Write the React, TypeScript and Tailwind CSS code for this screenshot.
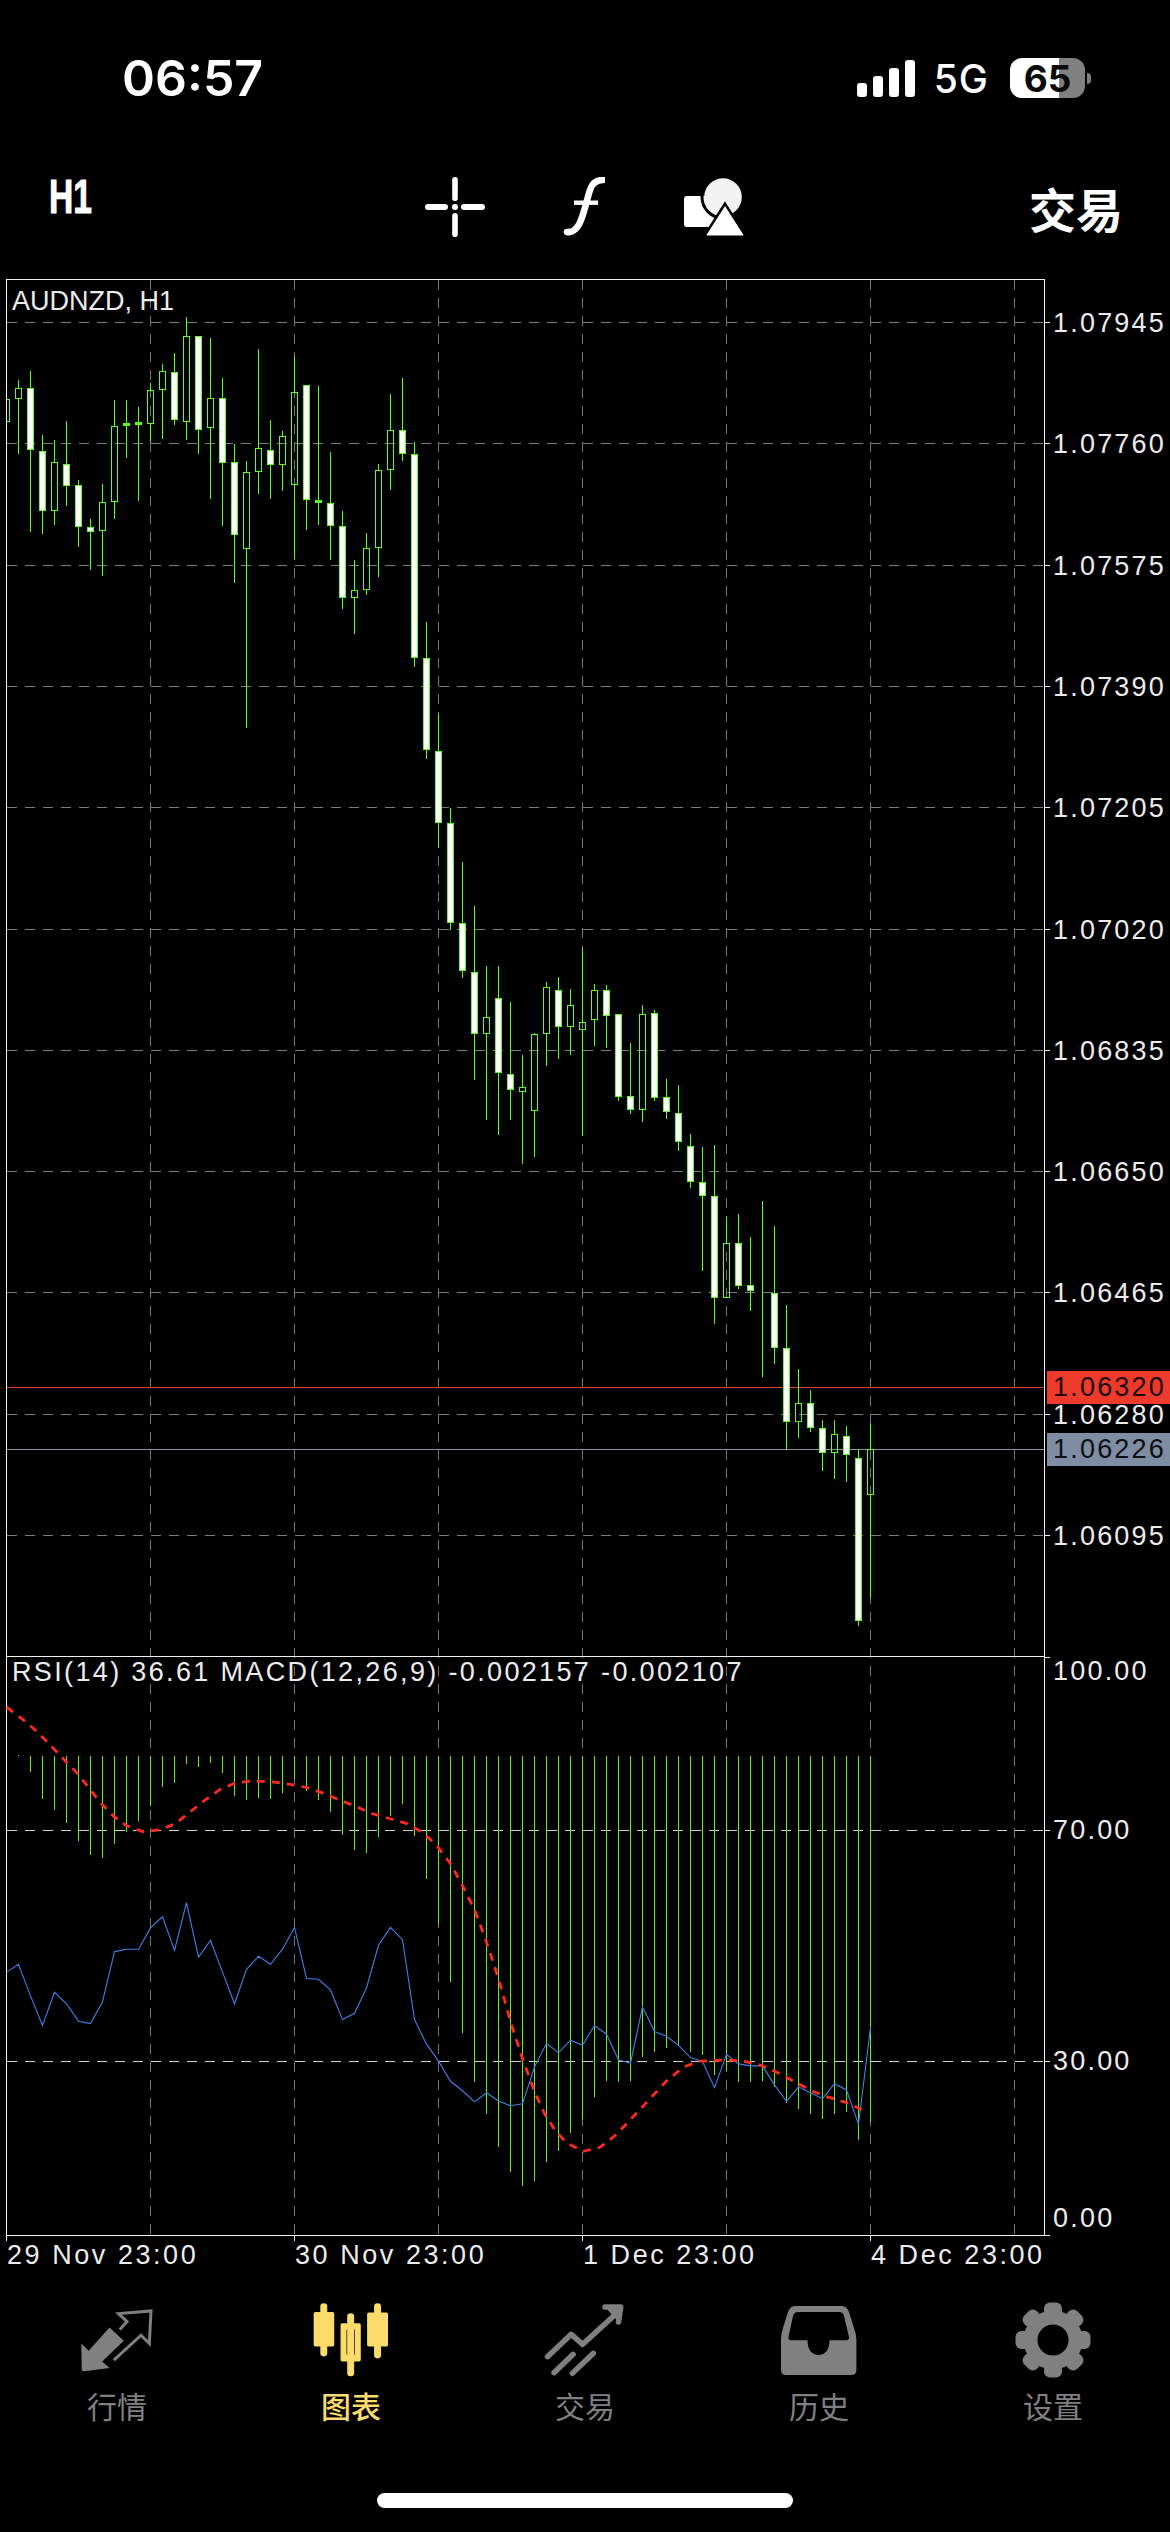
import React from 'react';

const SANS = "font-['Liberation_Sans',Arial,sans-serif]";
const CJK = "font-['Noto_Sans_CJK_SC','Noto_Sans',sans-serif]";
const CHART_TOP = 270;

const CANDLE = '#5BFF1E';
const HIST = '#66F020';

// values are read off the 3x crops: [high, bodyTop, bodyBottom, low, kind]
// kind: w = white body, h = hollow body, d = doji
type Row = [number, number, number, number, 'w' | 'h' | 'd'];

const fromCrop = (base: number, rows: Row[]) =>
  rows.map(([high, top, bottom, low, kind]) => ({
    high: base + high / 3,
    top: base + top / 3,
    bottom: base + bottom / 3,
    low: base + low / 3,
    kind,
  }));

const candles = [
  ...fromCrop(280, [
    [358, 358, 422, 422, 'h'],
    [297, 325, 355, 518, 'h'],
    [270, 323, 508, 752, 'w'],
    [462, 512, 691, 760, 'w'],
    [476, 547, 689, 732, 'h'],
    [420, 553, 616, 676, 'w'],
    [597, 614, 739, 798, 'w'],
    [715, 742, 754, 866, 'w'],
    [608, 667, 751, 885, 'h'],
    [357, 439, 664, 715, 'h'],
    [357, 430, 436, 530, 'd'],
    [378, 427, 431, 660, 'd'],
    [307, 331, 430, 482, 'h'],
    [250, 274, 328, 475, 'h'],
    [217, 275, 418, 431, 'w'],
    [108, 169, 424, 476, 'h'],
    [165, 169, 448, 520, 'w'],
    [172, 355, 442, 654, 'h'],
    [290, 355, 547, 736, 'w'],
    [488, 547, 763, 906, 'w'],
    [540, 577, 805, 1340, 'h'],
    [204, 505, 574, 640, 'h'],
    [416, 511, 553, 655, 'w'],
    [450, 469, 553, 630, 'h'],
    [225, 337, 613, 835, 'h'],
    [313, 316, 658, 748, 'w'],
    [316, 661, 667, 732, 'd'],
    [513, 670, 736, 837, 'w'],
    [690, 739, 952, 984, 'w'],
    [836, 931, 952, 1060, 'h'],
    [755, 805, 928, 942, 'h'],
    [548, 571, 800, 888, 'h'],
    [340, 451, 568, 628, 'h'],
    [292, 451, 520, 540, 'w'],
    [483, 523, 1132, 1158, 'w'],
    [1024, 1135, 1408, 1434, 'w'],
  ]),
  ...fromCrop(740, [
    [-80, 34, 247, 322, 'w'],
    [200, 250, 547, 567, 'w'],
    [363, 550, 691, 711, 'w'],
    [496, 697, 880, 1016, 'w'],
    [676, 832, 880, 1137, 'h'],
    [676, 775, 997, 1183, 'w'],
    [783, 1003, 1048, 1136, 'w'],
    [942, 1042, 1052, 1268, 'h'],
    [877, 883, 1111, 1248, 'h'],
    [724, 742, 880, 975, 'h'],
    [709, 751, 859, 955, 'w'],
    [745, 796, 859, 942, 'h'],
    [620, 847, 868, 1184, 'h'],
    [730, 751, 838, 915, 'h'],
    [733, 751, 824, 920, 'w'],
    [823, 823, 1067, 1080, 'w'],
    [905, 1069, 1108, 1120, 'w'],
    [792, 823, 1108, 1143, 'h'],
    [808, 820, 1070, 1080, 'w'],
    [1014, 1072, 1114, 1135, 'w'],
    [1032, 1120, 1204, 1230, 'w'],
    [1180, 1219, 1324, 1340, 'w'],
  ]),
  ...fromCrop(1180, [
    [-101, 6, 46, 270, 'w'],
    [-108, 49, 352, 428, 'w'],
    [108, 190, 352, 352, 'h'],
    [98, 190, 314, 324, 'w'],
    [168, 316, 329, 390, 'w'],
    [60, 331, 331, 587, 'h'],
    [134, 340, 502, 548, 'w'],
    [372, 505, 724, 808, 'w'],
    [564, 670, 724, 772, 'h'],
    [627, 670, 742, 752, 'w'],
    [716, 745, 815, 871, 'w'],
    [718, 763, 815, 895, 'h'],
    [735, 769, 823, 903, 'w'],
    [808, 835, 1321, 1335, 'w'],
    [727, 808, 943, 1250, 'h'],
  ]),
];

const INDICATOR_SCALE = 2.529;
const indY = (z: number) => 1640 + z / INDICATOR_SCALE;
const barX = (i: number) => 6.5 + 12 * i;

// starts at the second candle
const histogram = [
  290, 333, 402, 430, 463, 508, 543, 551, 515, 485, 458, 420, 373, 362, 314, 321, 311, 337, 394, 404, 400, 402, 388,
  352, 381, 405, 435, 492, 530, 539, 498, 445, 414, 495, 605, 721, 865, 994, 1118, 1200, 1283, 1345, 1380, 1368, 1320,
  1292, 1248, 1212, 1156, 1115, 1117, 1115, 1055, 1042, 1032, 1025, 1042, 1050, 1100, 1090, 1117, 1118, 1115, 1130,
  1170, 1187, 1198, 1212, 1200, 1193, 1265, 1218,
];

const rsi = [
  840, 820, 900, 975, 891, 920, 964, 970, 915, 788, 782, 782, 728, 700, 785, 664, 802, 760, 840, 920, 833, 800, 820,
  782, 727, 856, 858, 885, 960, 944, 880, 772, 727, 758, 960, 1022, 1065, 1116, 1140, 1168, 1145, 1166, 1178, 1173,
  1080, 1020, 1044, 1012, 1025, 975, 997, 1062, 1070, 928, 990, 1002, 1025, 1056, 1066, 1132, 1048, 1072, 1077, 1077,
  1125, 1167, 1130, 1145, 1160, 1122, 1138, 1225, 980,
];

const signalLeft = [
  [20, 170], [75, 205], [115, 235], [150, 265], [195, 305], [235, 340], [270, 378], [300, 410], [340, 445], [380, 470],
  [430, 485], [480, 480], [525, 465], [570, 435], [615, 405], [660, 378], [705, 362], [750, 357], [810, 358], [870, 365],
  [920, 373], [965, 386], [1020, 405], [1070, 422], [1120, 440], [1170, 452], [1220, 464], [1270, 488], [1310, 520],
];
const signalRight = [
  [1, 565], [40, 625], [75, 685], [108, 760], [145, 855], [185, 975], [220, 1065], [255, 1145], [285, 1200], [315, 1240],
  [350, 1272], [400, 1293], [450, 1283], [500, 1250], [550, 1205], [600, 1160], [650, 1115], [700, 1080], [750, 1065],
  [830, 1062], [880, 1065], [935, 1076], [985, 1095], [1040, 1120], [1090, 1142], [1130, 1155], [1190, 1170], [1235, 1188],
];
const signalPoints = [
  ...signalLeft.map(([x, y]) => `${x / 3},${indY(y)}`),
  ...signalRight.map(([x, y]) => `${450 + x / 3},${indY(y)}`),
].join(' ');

const priceLabels = [
  '1.07945', '1.07760', '1.07575', '1.07390', '1.07205', '1.07020', '1.06835', '1.06650', '1.06465', '1.06280', '1.06095',
];
const priceY = (k: number) => Math.round(322 + 121.3 * k) + 0.5;
const indicatorLabels = [
  { text: '100.00', y: 1671 },
  { text: '70.00', y: 1830 },
  { text: '30.00', y: 2061 },
  { text: '0.00', y: 2218 },
];
const gridX = [150.5, 294.5, 438.5, 582.5, 726.5, 870.5, 1014.5];
const dateLabels = [
  { text: '29 Nov 23:00', x: 7 },
  { text: '30 Nov 23:00', x: 295 },
  { text: '1 Dec 23:00', x: 583 },
  { text: '4 Dec 23:00', x: 871 },
];

const snap = (v: number) => Math.round(v) + 0.5;

const Chart = () => (
  <svg viewBox={`0 ${CHART_TOP} 1170 2000`} width={1170} height={2000} className="block">
    <defs>
      <clipPath id="plot">
        <rect x={6} y={279} width={1038} height={1956} />
      </clipPath>
    </defs>
    <g shapeRendering="crispEdges" fill="none">
      {gridX.map(x => (
        <line key={x} x1={x} x2={x} y1={280} y2={2235} stroke="#747474" strokeDasharray="10 8" />
      ))}
      {priceLabels.map((_, k) => (
        <line key={k} x1={7} x2={1044} y1={priceY(k)} y2={priceY(k)} stroke="#7d7d7d" strokeDasharray="10 8" />
      ))}
      {[1830.5, 2061.5].map(y => (
        <line key={y} x1={7} x2={1044} y1={y} y2={y} stroke="#d0d0d0" strokeDasharray="10 8" />
      ))}

      <line x1={6} x2={1044} y1={1387.5} y2={1387.5} stroke="#e0402f" />
      <line x1={6} x2={1044} y1={1449.5} y2={1449.5} stroke="#8b93a0" />

      <g clipPath="url(#plot)">
        {candles.map((c, n) => {
          const x = barX(n);
          const top = snap(c.top);
          const bottom = snap(c.bottom);
          return (
            <g key={n} stroke={CANDLE}>
              <line x1={x} x2={x} y1={snap(c.high)} y2={top} />
              <line x1={x} x2={x} y1={bottom} y2={snap(c.low)} />
              <rect
                x={x - 3}
                y={top}
                width={6}
                height={Math.max(bottom - top, 0)}
                fill={c.kind === 'w' ? '#ffffff' : c.kind === 'd' ? CANDLE : 'none'}
              />
            </g>
          );
        })}
      </g>

      {histogram.map((z, i) => (
        <line key={i} x1={barX(i + 1)} x2={barX(i + 1)} y1={1756} y2={indY(z)} stroke={HIST} />
      ))}

      {/* frame and axis ticks */}
      <g stroke="#f2f2f2">
        <line x1={6.5} x2={6.5} y1={279} y2={2241} />
        <line x1={1044.5} x2={1044.5} y1={279} y2={2235} />
        <line x1={6} x2={1045} y1={279.5} y2={279.5} />
        <line x1={6} x2={1045} y1={1656.5} y2={1656.5} />
        <line x1={6} x2={1050} y1={2235.5} y2={2235.5} />
        {priceLabels.map((_, k) => (
          <line key={k} x1={1045} x2={1050} y1={priceY(k)} y2={priceY(k)} />
        ))}
        <line x1={1045} x2={1050} y1={1657.5} y2={1657.5} />
        <line x1={1045} x2={1050} y1={1830.5} y2={1830.5} />
        <line x1={1045} x2={1050} y1={2061.5} y2={2061.5} />
        {[294.5, 582.5, 870.5].map(x => (
          <line key={x} x1={x} x2={x} y1={2236} y2={2241} />
        ))}
      </g>
    </g>

    <polyline
      points={rsi.map((z, i) => `${barX(i)},${indY(z)}`).join(' ')}
      fill="none"
      stroke="#3f80ea"
      strokeWidth={1.1}
    />
    <polyline points={signalPoints} fill="none" stroke="#ff2a1f" strokeWidth={2.8} strokeDasharray="8 7" />
  </svg>
);

const AxisText = ({ text, x, y, className = '' }: { text: string; x: number; y: number; className?: string }) => (
  <span
    className={`absolute -translate-y-1/2 whitespace-nowrap text-[27px] leading-none ${SANS} ${className}`}
    style={{ left: x, top: y - CHART_TOP }}
  >
    {text}
  </span>
);

const ChartPanel = () => (
  <div className="relative h-[2000px] w-full text-[#ececec]">
    <Chart />
    <AxisText text="AUDNZD, H1" x={12} y={301} />
    <AxisText
      text="RSI(14) 36.61 MACD(12,26,9) -0.002157 -0.002107"
      x={12}
      y={1672}
      className="tracking-[2.35px]"
    />
    {priceLabels.map((text, k) => (
      <AxisText key={text} text={text} x={1053} y={priceY(k)} className="tracking-[2.2px]" />
    ))}
    {indicatorLabels.map(l => (
      <AxisText key={l.text} text={l.text} x={1053} y={l.y} className="tracking-[2.2px]" />
    ))}
    {dateLabels.map(l => (
      <AxisText key={l.text} text={l.text} x={l.x} y={2255} className="tracking-[2.55px]" />
    ))}
    <div
      className={`absolute left-[1047px] top-[1101px] flex h-[33px] w-[123px] items-center bg-[#ee3a2a] pl-[6px] text-[27px] leading-none tracking-[2.2px] text-[#1a0a08] ${SANS}`}
    >
      1.06320
    </div>
    <div
      className={`absolute left-[1047px] top-[1163px] flex h-[33px] w-[123px] items-center bg-[#7f8da2] pl-[6px] text-[27px] leading-none tracking-[2.2px] text-[#0c0f14] ${SANS}`}
    >
      1.06226
    </div>
  </div>
);

const StatusBar = () => (
  <div className="flex h-[150px] items-start justify-between pl-[122px] pr-[79px] pt-[58px] text-white">
    <span className="font-['Inter',sans-serif] text-[50px] font-semibold leading-[40px]">06:57</span>
    <div className="flex h-[40px] items-center">
      <div className="flex items-end gap-[6px] pt-[1px]">
        <div className="h-[14px] w-[10px] rounded-[3px] bg-white" />
        <div className="h-[21px] w-[10px] rounded-[3px] bg-white" />
        <div className="h-[29px] w-[10px] rounded-[3px] bg-white" />
        <div className="h-[37px] w-[10px] rounded-[3px] bg-white" />
      </div>
      <span className="ml-[19px] font-['Inter',sans-serif] text-[39px] font-medium leading-none tracking-[1px]">5G</span>
      <div className="ml-[21px] flex h-[40px] w-[75px] items-center justify-center rounded-[12px] bg-[linear-gradient(90deg,#ffffff_65%,#808080_65%)] font-['Inter',sans-serif] text-[37px] font-bold leading-none text-[#0a0a0a]">
        65
      </div>
      <div className="ml-[2px] h-[11px] w-[4px] rounded-r-full bg-[#808080]" />
    </div>
  </div>
);

const CrosshairIcon = () => (
  <svg width={60} height={60} viewBox="0 0 60 60" className="ml-[335px]">
    <g fill="white">
      <rect x={0} y={27} width={23} height={6} rx={3} />
      <rect x={36} y={27} width={24} height={6} rx={3} />
      <rect x={27.2} y={0} width={5.6} height={24} rx={2.8} />
      <rect x={27.2} y={36} width={5.6} height={24} rx={2.8} />
      <circle cx={30} cy={30} r={3} />
    </g>
  </svg>
);

const FunctionIcon = () => (
  <svg width={42} height={60} viewBox="0 0 42 60" fill="none" stroke="white" className="ml-[78px]">
    <path d="M40 3 C33 3 29 6.5 27 13 C24 22 22 33 18 43 C15 51 10 56 4 55" strokeWidth={6.6} strokeLinecap="round" />
    <path d="M11 25.7 H35" strokeWidth={4.4} />
  </svg>
);

const ShapesIcon = () => (
  <svg width={62} height={60} viewBox="0 0 62 60" className="ml-[78px]">
    <rect x={1} y={19} width={34} height={31} rx={3} fill="white" />
    <circle cx={40} cy={20} r={18.8} fill="#f2f2f2" />
    <circle cx={40} cy={20} r={21} fill="none" stroke="black" strokeWidth={3} />
    <path d="M42 29 L60.5 58 H23.5 Z" fill="white" stroke="black" strokeWidth={5} paintOrder="stroke" />
    <path d="M42 31 L60.5 58.5 H23.5 Z" fill="white" />
  </svg>
);

const Toolbar = () => (
  <div className="flex h-[120px] items-center pb-[6px] pl-[49px] pr-[47px] text-white">
    <span
      className={`mb-[20px] w-[41px] origin-left scale-x-[0.7] whitespace-nowrap text-[48px] font-bold leading-none [-webkit-text-stroke:1px_white] ${SANS}`}
    >
      H1
    </span>
    <CrosshairIcon />
    <FunctionIcon />
    <ShapesIcon />
    <span className={`ml-auto text-[47px] font-bold leading-none ${CJK}`}>交易</span>
  </div>
);

const QuotesIcon = () => (
  <svg width={78} height={68} viewBox="110 45 235 205">
    <path d="M120 158 L142 180 L205 110 L248 150 L183 212 L205 232 L130 242 Q121 242 121 234 Z" fill="#808080" />
    <path
      d="M236 116 L258 92 L232 68 L330 60 L325 158 L300 133 L218 208"
      fill="none"
      stroke="#808080"
      strokeWidth={9}
    />
  </svg>
);

const CandlesIcon = () => (
  <svg width={82} height={78} viewBox="810 30 245 235" fill="#fbdc6a">
    <rect x={840} y={37} width={21} height={160} rx={10} />
    <rect x={820} y={63} width={62} height={104} rx={5} />
    <rect x={1002} y={37} width={21} height={166} rx={10} />
    <rect x={981} y={65} width={63} height={102} rx={5} />
    <rect x={921} y={67} width={21} height={190} rx={10} />
    <path
      fillRule="evenodd"
      d="M906 97 H957 Q962 97 962 102 V207 Q962 212 957 212 H906 Q901 212 901 207 V102 Q901 97 906 97 Z M926 113 Q919 113 919 120 V188 Q919 195 926 195 H937 Q944 195 944 188 V120 Q944 113 937 113 Z"
    />
  </svg>
);

const TradeIcon = () => (
  <svg width={90} height={78} viewBox="0 0 90 78" fill="none" stroke="#808080" strokeWidth={5.5} strokeLinecap="round">
    <path d="M7.5 55.7 L31.2 33.3 L42.7 43.3 L78 11" strokeLinejoin="round" />
    <path d="M14 71.7 L33.1 53.3" />
    <path d="M32.4 72.3 L53.4 52.3" />
    <path d="M65 6 H80.7 L78.5 21" fill="#808080" strokeLinejoin="round" />
  </svg>
);

const HistoryIcon = () => (
  <svg width={76} height={69} viewBox="0 0 76 69" fill="#808080">
    <path
      fillRule="evenodd"
      d="M14 0 H61 Q66 0 68 6 L73 22 Q75.4 28 75.4 34 V64 Q75.4 69 70 69 H5 Q0 69 0 64 V34 Q0 28 2 22 L7 6 Q9 0 14 0 Z M17 6 H58 Q62 6 63 10 L68 31 Q68.5 34.3 65 34.3 H48.5 C48.5 44 44 49 37.5 49 C31 49 26.5 44 26.5 34.3 H10 Q7 34.3 7.5 31 L12 10 Q13 6 17 6 Z"
    />
  </svg>
);

const GearIcon = () => (
  <svg width={76} height={76} viewBox="-38 -38 76 76" fill="#808080">
    <circle r={22.5} fill="none" stroke="#808080" strokeWidth={14} />
    {[0, 45, 90, 135, 180, 225, 270, 315].map(a => (
      <rect key={a} x={-9} y={-37.5} width={18} height={14} rx={6} transform={`rotate(${a})`} />
    ))}
  </svg>
);

const tabs = [
  { label: '行情', icon: <QuotesIcon /> },
  { label: '图表', icon: <CandlesIcon />, active: true },
  { label: '交易', icon: <TradeIcon /> },
  { label: '历史', icon: <HistoryIcon /> },
  { label: '设置', icon: <GearIcon /> },
];

const TabBar = () => (
  <div className="grid grid-cols-5 pt-[30px]">
    {tabs.map(tab => (
      <div key={tab.label} className="flex flex-col items-center">
        <div className="flex h-[80px] items-center justify-center">{tab.icon}</div>
        <span
          className={`mt-[10px] text-[30px] leading-none ${CJK} ${tab.active ? 'font-medium text-[#fbdc6a]' : 'text-[#808080]'}`}
        >
          {tab.label}
        </span>
      </div>
    ))}
  </div>
);

export default function App() {
  return (
    <div className="flex h-[2532px] w-[1170px] flex-col overflow-hidden bg-black">
      <StatusBar />
      <Toolbar />
      <ChartPanel />
      <TabBar />
      <div className="mx-auto mt-[73px] h-[15px] w-[416px] rounded-full bg-white" />
    </div>
  );
}
